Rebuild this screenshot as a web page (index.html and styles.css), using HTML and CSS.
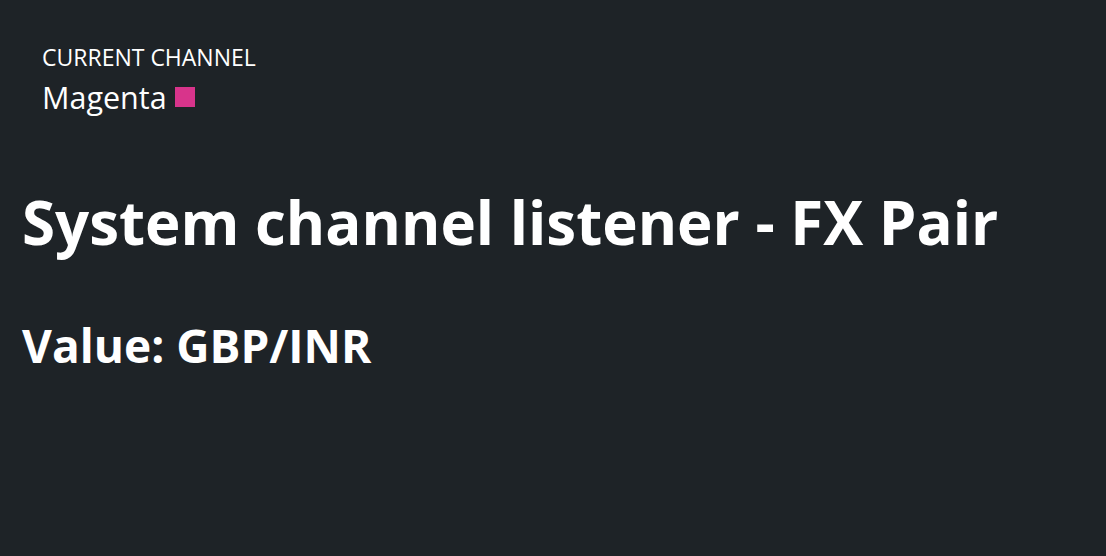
FILE: index.html
```html
<!DOCTYPE html>
<html>
<head>
<meta charset="utf-8">
<link rel="stylesheet" href="styles.css">
</head>
<body>
<div class="page">
  <div class="channel">
    <div class="channel-label">CURRENT CHANNEL</div>
    <div class="channel-name">Magenta <span class="swatch"></span></div>
  </div>
  <h1 class="title">System channel listener - FX Pair</h1>
  <h2 class="value">Value: GBP/INR</h2>
</div>
</body>
</html>
```
FILE: styles.css
```css
html, body {
  margin: 0;
  padding: 0;
  background: #1e2327;
  color: #ffffff;
  font-family: "Open Sans", "Noto Sans", sans-serif;
}
.page {
  padding: 40px 22px 0 22px;
}
.channel {
  padding-left: 20px;
}
.channel-label {
  font-size: 23px;
  line-height: 34px;
}
.channel-name {
  font-size: 30.5px;
  line-height: 46px;
  display: flex;
  align-items: center;
  gap: 8px;
}
.swatch {
  display: inline-block;
  width: 20px;
  height: 20px;
  background: #d8348b;
}
.title {
  margin: 62px 0 0 0;
  font-size: 60px;
  font-weight: 700;
  line-height: 80px;
}
.value {
  margin: 55px 0 0 0;
  font-size: 46px;
  font-weight: 700;
  line-height: 56px;
}
```
